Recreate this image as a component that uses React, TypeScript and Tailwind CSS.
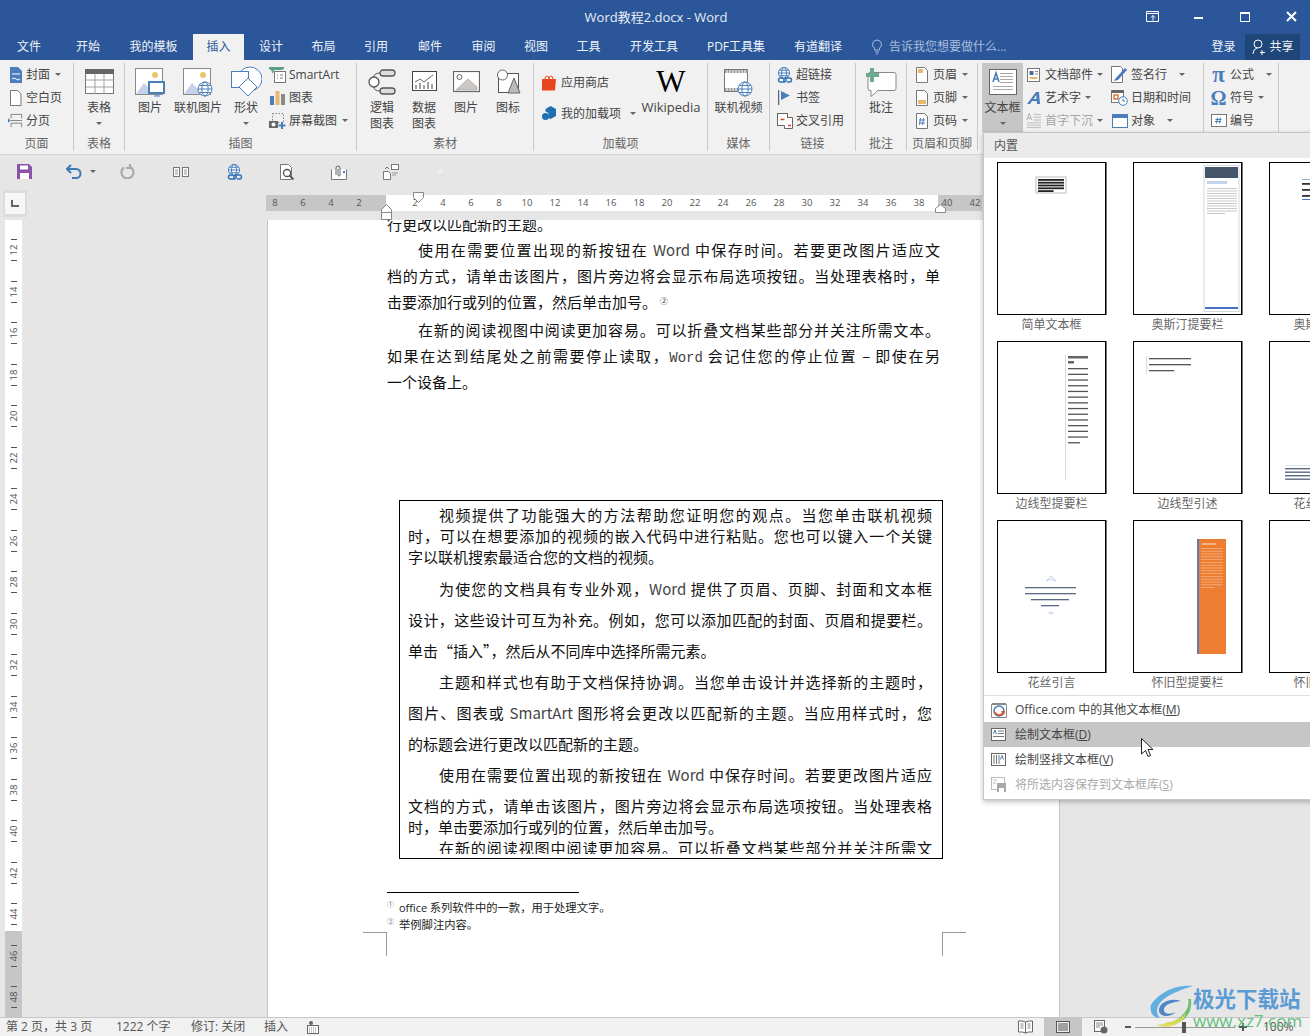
import type { ReactNode } from "react";
import clsx from "clsx";

const ICON = "#4a7ebb";

const tabs = [
  { label: "文件", w: "w-[58px]" },
  { label: "开始", w: "w-[60px]" },
  { label: "我的模板", w: "w-[75px] pr-[4px]" },
  { label: "插入", w: "w-[51px]", active: true },
  { label: "设计", w: "w-[54px]" },
  { label: "布局", w: "w-[51px]" },
  { label: "引用", w: "w-[54px]" },
  { label: "邮件", w: "w-[54px]" },
  { label: "审阅", w: "w-[53px]" },
  { label: "视图", w: "w-[52px]" },
  { label: "工具", w: "w-[53px]" },
  { label: "开发工具", w: "w-[78px]" },
  { label: "PDF工具集", w: "w-[86px]" },
  { label: "有道翻译", w: "w-[78px]" },
];

const rulerTop = ["8", "6", "4", "2", "", "2", "4", "6", "8", "10", "12", "14", "16", "18", "20", "22", "24", "26", "28", "30", "32", "34", "36", "38", "40", "42"];
const rulerSide = ["", "12", "14", "16", "18", "20", "22", "24", "26", "28", "30", "32", "34", "36", "38", "40", "42", "44", "46", "48"];

function Caret({ className }: { className?: string }) {
  return <span className={clsx("inline-block h-0 w-0 border-x-[3px] border-t-[3px] border-x-transparent border-t-[#666]", className)} />;
}

/* ---------- icons ---------- */
function Globe({ x, y, r }: { x: number; y: number; r: number }) {
  return (
    <g fill="#fff" stroke={ICON} strokeWidth="1">
      <circle cx={x} cy={y} r={r} />
      <ellipse cx={x} cy={y} rx={r * 0.45} ry={r} fill="none" />
      <path d={`M${x - r} ${y}H${x + r}M${x - r + 1} ${y - r / 2}H${x + r - 1}M${x - r + 1} ${y + r / 2}H${x + r - 1}`} fill="none" />
    </g>
  );
}

function Mountain({ online }: { online?: boolean }) {
  return (
    <svg width="32" height="32" viewBox="0 0 32 32">
      <rect x="1.5" y="2.5" width="27" height="26" fill="#fff" stroke="#8a8a8a" />
      <circle cx="21" cy="9" r="3" fill="#f0c36d" />
      <path d="M2 28L10 17l6 6 3 5z" fill="#c3d4e8" />
      {online ? (
        <Globe x={23} y={23} r={7} />
      ) : (
        <g>
          <rect x="15" y="16" width="15" height="11" fill="#fff" stroke={ICON} strokeWidth="2" />
          <path d="M20 30h6M23 27v3" stroke={ICON} />
        </g>
      )}
    </svg>
  );
}

const linkArt = (
  <>
    <Globe x={7} y={6} r={5.5} />
    <path d="M6 11H3.500a2 2 0 0 0 0 4h4a2 2 0 0 0 1-3.500M10 15h2.500a2 2 0 0 0 0-4h-4a2 2 0 0 0-1 3.500" fill="none" stroke="#2e74b5" strokeWidth="1.500" />
  </>
);

const ic = {
  cover: (
    <svg width="14" height="16" viewBox="0 0 14 16">
      <path d="M1 0h8l4 4v12H1z" fill={ICON} />
      <path d="M3 7h8M3 12q2-2 4 0t4 0" stroke="#fff" fill="none" />
    </svg>
  ),
  blank: (
    <svg width="13" height="16" viewBox="0 0 13 16">
      <path d="M1.5.5h7l3.500 3.500v11.500h-10.500z" fill="#fff" stroke="#777" />
    </svg>
  ),
  pageBreak: (
    <svg width="17" height="16" viewBox="0 0 17 16">
      <path d="M3.500 5V.5h12V5M3.500 15v-4.500h12V15" fill="none" stroke="#777" />
      <path d="M0 5l3 2.500L0 10z" fill={ICON} />
      <path d="M3 7.500h13" stroke="#777" />
    </svg>
  ),
  table: (
    <svg width="29" height="26" viewBox="0 0 29 26">
      <rect x=".5" y=".5" width="28" height="24" fill="#fff" stroke="#777" />
      <rect x="0" y="0" width="29" height="5" fill="#666" />
      <path d="M10 5v20M19 5v20M1 11h27M1 18h27" stroke="#a3a3a3" />
    </svg>
  ),
  shapes: (
    <svg width="32" height="32" viewBox="0 0 32 32">
      <circle cx="20" cy="13" r="12" fill="#fff" stroke={ICON} />
      <rect x="1.500" y="5.500" width="17" height="16" fill="#fff" stroke={ICON} />
      <path d="M18 12l9 9-9 9-9-9z" fill="#fff" stroke={ICON} />
    </svg>
  ),
  smartart: (
    <svg width="17" height="16" viewBox="0 0 17 16">
      <path d="M0 0h15v2l-3 1H5l-1 4-2-4-2-1z" fill="#5d9e8b" />
      <rect x="5.500" y="4.500" width="11" height="11" fill="#fff" stroke="#777" />
      <path d="M8 8h1M11 8h3M8 11h1M11 11h3" stroke="#777" />
    </svg>
  ),
  chart: (
    <svg width="15" height="15" viewBox="0 0 15 15">
      <rect x="0" y="6" width="4" height="9" fill={ICON} />
      <rect x="5.500" y="1" width="4" height="14" fill="#e8b96a" />
      <rect x="11" y="4" width="4" height="11" fill="#8a8a8a" />
    </svg>
  ),
  screenshot: (
    <svg width="17" height="16" viewBox="0 0 17 16">
      <rect x="3.500" y=".5" width="11" height="9" fill="none" stroke="#888" strokeDasharray="1.500 1.500" />
      <rect x="0" y="8" width="9" height="7" fill="#666" />
      <circle cx="4.500" cy="11.500" r="2" fill="#fff" />
      <path d="M13 9v7M9.500 12.500h7" stroke={ICON} strokeWidth="2" />
    </svg>
  ),
  logic: (
    <svg width="28" height="26" viewBox="0 0 28 26">
      <circle cx="6" cy="13" r="5" fill="#fff" stroke="#555" strokeWidth="1.300" />
      <rect x="12" y="1" width="15" height="6" rx="3" fill="#ddd" stroke="#555" strokeWidth="1.300" />
      <rect x="12" y="19" width="15" height="6" rx="3" fill="#ddd" stroke="#555" strokeWidth="1.300" />
      <path d="M12 4Q6 4 6 8M12 22Q6 22 6 18" fill="none" stroke="#555" />
    </svg>
  ),
  data: (
    <svg width="25" height="22" viewBox="0 0 25 22">
      <rect x=".5" y=".5" width="24" height="19" fill="#fff" stroke="#444" />
      <path d="M3 11l5-3 4 3 5-4 4-3" fill="none" stroke="#666" />
      <path d="M4 18v-4M8 18v-6M12 18v-4M16 18v-7M20 18v-5" stroke="#444" />
    </svg>
  ),
  picture: (
    <svg width="27" height="22" viewBox="0 0 27 22">
      <rect x=".5" y=".5" width="26" height="20" fill="#fff" stroke="#666" strokeWidth="1.200" />
      <circle cx="6.500" cy="6" r="2.500" fill="none" stroke="#666" />
      <path d="M3 19l12-11 9 8v3z" fill="#cbc7c4" stroke="#888" strokeWidth=".5" />
    </svg>
  ),
  icons: (
    <svg width="25" height="26" viewBox="0 0 25 26">
      <rect x="2.500" y="4.500" width="20" height="19" fill="#fff" stroke="#555" />
      <circle cx="6.500" cy="6" r="5" fill="#fff" stroke="#666" />
      <path d="M18 9l6 15H12z" fill="#bbb" stroke="#666" />
    </svg>
  ),
  store: (
    <svg width="15" height="16" viewBox="0 0 15 16">
      <path d="M0 4h14l-1 11.500H0z" fill="#e8471d" />
      <path d="M3 4q0-3 2-3t2 3q0-3 2-3t2 3" fill="none" stroke="#e8471d" />
    </svg>
  ),
  addin: (
    <svg width="15" height="15" viewBox="0 0 15 15">
      <path d="M8.500 0l5.500 3v7l-5.500 3-2-1V7L3.500 5.500V3z" fill="#1f6fb2" />
      <circle cx="3.500" cy="10.500" r="3.500" fill="#1f6fb2" />
    </svg>
  ),
  video: (
    <svg width="29" height="32" viewBox="0 0 29 32">
      <rect x=".5" y="3.500" width="23" height="22" fill="#fff" stroke="#777" />
      <path d="M1 4h23v3H1zM1 22h23v3H1z" fill="#999" />
      <path d="M3 4v3M6 4v3M9 4v3M12 4v3M15 4v3M18 4v3M21 4v3M3 22v3M6 22v3M9 22v3M12 22v3" stroke="#fff" />
      <Globe x={21} y={23} r={7} />
    </svg>
  ),
  link: (
    <svg width="16" height="16" viewBox="0 0 16 16">
      {linkArt}
    </svg>
  ),
  bookmark: (
    <svg width="13" height="15" viewBox="0 0 13 15">
      <path d="M.5 0v15" stroke="#666" strokeWidth="1.500" />
      <path d="M3 1l9 4.500L3 10z" fill={ICON} />
    </svg>
  ),
  crossref: (
    <svg width="16" height="16" viewBox="0 0 16 16">
      <rect x=".5" y=".5" width="10" height="12" fill="#fff" stroke="#666" />
      <path d="M10.500 4.500h5v11h-8v-3" fill="#fff" stroke="#666" />
      <path d="M3.500 6.500h4M11 12.500h3" stroke="#d2462a" strokeWidth="1.500" />
    </svg>
  ),
  comment: (
    <svg width="31" height="30" viewBox="0 0 31 30">
      <path d="M4 5.500h24a2 2 0 0 1 2 2v14a2 2 0 0 1-2 2H12l-7 6v-6H4a2 2 0 0 1-2-2v-14a2 2 0 0 1 2-2z" fill="#fff" stroke="#888" />
      <path d="M7 0v14M0 7h14" stroke="#6fa98f" strokeWidth="4" transform="translate(-1 1)" />
    </svg>
  ),
  header: (
    <svg width="12" height="16" viewBox="0 0 12 16">
      <path d="M.5.5h8l3 3v12H.5z" fill="#fff" stroke="#777" />
      <rect x="2" y="2" width="5" height="4" fill="#e8b96a" />
    </svg>
  ),
  footer: (
    <svg width="12" height="16" viewBox="0 0 12 16">
      <path d="M.5.5h8l3 3v12H.5z" fill="#fff" stroke="#777" />
      <rect x="2" y="10" width="8" height="4" fill="#e8b96a" />
    </svg>
  ),
  pageNo: (
    <svg width="12" height="16" viewBox="0 0 12 16">
      <path d="M.5.5h8l3 3v12H.5z" fill="#fff" stroke="#777" />
      <path d="M4.500 5l-1 7M7.500 5l-1 7M3 7h6M3 10h6" stroke={ICON} />
    </svg>
  ),
  textbox: (
    <svg width="28" height="26" viewBox="0 0 28 26">
      <rect x=".5" y=".5" width="27" height="25" fill="#fff" stroke="#666" />
      <path d="M11 4.500h13M11 7.500h13M11 10.500h13M11 13.500h13M4 17.500h20M4 20.500h20" stroke="#aaa" />
      <path d="M4 13l3-9 3 9M5 10h4" fill="none" stroke={ICON} strokeWidth="1.600" />
    </svg>
  ),
  parts: (
    <svg width="14" height="14" viewBox="0 0 14 14">
      <rect x=".5" y=".5" width="12" height="13" fill="#fff" stroke="#777" />
      <rect x="2.500" y="3" width="4" height="4" fill="#4a6f9f" />
      <path d="M8 3.500h3M8 6h3" stroke="#888" />
      <rect x="2.500" y="9" width="8" height="2" fill="#e8b96a" />
    </svg>
  ),
  wordart: (
    <svg width="14" height="14" viewBox="0 0 14 14">
      <path d="M0 13L9 1h3l1 12h-3l-.3-3H5l-2 3zM6.500 8h3L9.200 4z" fill={ICON} />
    </svg>
  ),
  dropcap: (
    <svg width="17" height="17" viewBox="0 0 17 17">
      <path d="M1 8l2.500-7L6 8M2 6h3" fill="none" stroke="#aaa" />
      <path d="M8 2h8M8 5h8M8 8h8M1 11h15M1 13.500h15M1 16h15" stroke="#bbb" />
    </svg>
  ),
  sign: (
    <svg width="17" height="17" viewBox="0 0 17 17">
      <path d="M.5.5h9l2 2v14H.5z" fill="#fff" stroke="#777" />
      <path d="M4 13L14 2l2 2L7 14l-4 1z" fill={ICON} />
    </svg>
  ),
  date: (
    <svg width="17" height="17" viewBox="0 0 17 17">
      <rect x=".5" y="1.500" width="12" height="12" fill="#fff" stroke="#777" />
      <rect x="1" y="1" width="12" height="3" fill="#666" />
      <rect x="3" y="6" width="4" height="4" fill="none" stroke="#d2691e" strokeWidth="1.300" />
      <circle cx="12" cy="12" r="4.300" fill="#fff" stroke={ICON} />
      <path d="M12 9.500V12h2" fill="none" stroke={ICON} />
    </svg>
  ),
  object: (
    <svg width="16" height="14" viewBox="0 0 16 14">
      <rect x=".5" y=".5" width="15" height="13" fill="#fff" stroke={ICON} />
      <rect x="0" y="0" width="16" height="4" fill={ICON} />
    </svg>
  ),
  numbering: (
    <svg width="16" height="13" viewBox="0 0 16 13">
      <rect x=".5" y=".5" width="15" height="12" fill="#fff" stroke="#777" />
      <path d="M6.500 3.500l-1 6M9.500 3.500l-1 6M4.500 5.500h6M4 7.500h6" stroke={ICON} />
    </svg>
  ),
};

/* ---------- ribbon parts ---------- */
function Group({ label, className, children }: { label?: string; className: string; children: ReactNode }) {
  return (
    <div className={clsx("flex h-[88px] shrink-0 flex-col border-r border-[#c9c9c9]", className)}>
      <div className="flex h-[73px]">{children}</div>
      <div className="h-[15px] text-center leading-[16px] text-[#666]">{label}</div>
    </div>
  );
}

function Big({ icon, lines, caret, className }: { icon: ReactNode; lines: string[]; caret?: boolean; className: string }) {
  return (
    <div className={clsx("flex shrink-0 flex-col items-center", className)}>
      <div className="flex h-[37px] items-center justify-center">{icon}</div>
      {lines.map((l) => (
        <div key={l} className="h-[15.500px] whitespace-nowrap leading-[16px]">
          {l}
        </div>
      ))}
      {caret && <Caret className="mt-[6px]" />}
    </div>
  );
}

function Row({ icon, text, caret, gray, box, caretClass }: { icon: ReactNode; text: string; caret?: boolean; gray?: boolean; box?: string; caretClass?: string }) {
  return (
    <div className={clsx("flex h-[23px] items-center whitespace-nowrap", gray && "text-[#a6a6a6]")}>
      <span className={clsx("mr-[3px] flex shrink-0 items-center justify-center", box ?? "w-[17px]")}>{icon}</span>
      {text}
      {caret && <Caret className={caretClass ?? "ml-[5px]"} />}
    </div>
  );
}

function Ribbon() {
  return (
    <div className="flex h-[95px] border-b border-[#d2d2d2] bg-[#f1f1f1] pt-[3px] text-[12px] text-[#444]">
      <Group label="页面" className="w-[74px]">
        <div className="pl-[8px]">
          <Row icon={ic.cover} text="封面" caret box="w-[15px]" />
          <Row icon={ic.blank} text="空白页" box="w-[15px]" />
          <Row icon={ic.pageBreak} text="分页" box="w-[15px]" />
        </div>
      </Group>
      <Group label="表格" className="w-[51px]">
        <Big className="w-[50px]" icon={ic.table} lines={["表格"]} caret />
      </Group>
      <Group label="插图" className="w-[232px]">
        <div className="flex pl-[2px]">
          <Big className="w-[46px]" icon={<Mountain />} lines={["图片"]} />
          <Big className="w-[50px]" icon={<Mountain online />} lines={["联机图片"]} />
          <Big className="w-[46px]" icon={ic.shapes} lines={["形状"]} caret />
          <div>
            <Row icon={ic.smartart} text="SmartArt" />
            <Row icon={ic.chart} text="图表" />
            <Row icon={ic.screenshot} text="屏幕截图" caret />
          </div>
        </div>
      </Group>
      <Group label="素材" className="w-[177px]">
        <div className="flex pl-[4px]">
          <Big className="w-[42px]" icon={ic.logic} lines={["逻辑", "图表"]} />
          <Big className="w-[42px]" icon={ic.data} lines={["数据", "图表"]} />
          <Big className="w-[42px]" icon={ic.picture} lines={["图片"]} />
          <Big className="w-[42px]" icon={ic.icons} lines={["图标"]} />
        </div>
      </Group>
      <Group label="加载项" className="w-[174px]">
        <div className="flex pl-[8px]">
          <div className="w-[98px] pt-[4px]">
            <div className="flex h-[31px] items-center">
              <span className="mr-[4px]">{ic.store}</span>应用商店
            </div>
            <div className="flex h-[31px] items-center">
              <span className="mr-[4px]">{ic.addin}</span>我的加载项
              <Caret className="ml-[9px]" />
            </div>
          </div>
          <div className="flex w-[62px] flex-col items-center">
            <div className="flex h-[36px] items-center font-['Liberation_Serif',serif] text-[31px] leading-none text-black">W</div>
            <div className="text-[13px] leading-[16px]">Wikipedia</div>
          </div>
        </div>
      </Group>
      <Group label="媒体" className="w-[62px]">
        <Big className="w-[61px]" icon={ic.video} lines={["联机视频"]} />
      </Group>
      <Group label="链接" className="w-[86px]">
        <div className="pl-[6px]">
          <Row icon={ic.link} text="超链接" />
          <Row icon={ic.bookmark} text="书签" />
          <Row icon={ic.crossref} text="交叉引用" />
        </div>
      </Group>
      <Group label="批注" className="w-[51px]">
        <Big className="w-[50px]" icon={ic.comment} lines={["批注"]} />
      </Group>
      <Group label="页眉和页脚" className="w-[71px]">
        <div className="pl-[6px]">
          <Row icon={ic.header} text="页眉" caret />
          <Row icon={ic.footer} text="页脚" caret />
          <Row icon={ic.pageNo} text="页码" caret />
        </div>
      </Group>
      <Group className="w-[226px]">
        <div className="flex pl-[4px]">
          <div className="h-[69px] w-[41px] bg-[#c6c6c6]">
            <Big className="w-[41px]" icon={ic.textbox} lines={["文本框"]} caret />
          </div>
          <div className="ml-[3px] w-[85px]">
            <Row icon={ic.parts} text="文档部件" caret box="w-[16px]" caretClass="ml-[4px]" />
            <Row icon={ic.wordart} text="艺术字" caret box="w-[16px]" caretClass="ml-[4px]" />
            <Row icon={ic.dropcap} text="首字下沉" caret gray box="w-[16px]" caretClass="ml-[4px]" />
          </div>
          <div>
            <Row icon={ic.sign} text="签名行" caret caretClass="ml-[12px]" />
            <Row icon={ic.date} text="日期和时间" />
            <Row icon={ic.object} text="对象" caret caretClass="ml-[12px]" />
          </div>
        </div>
      </Group>
      <Group className="w-[75px]">
        <div className="pl-[6px]">
          <Row icon={<span className="font-['Liberation_Serif',serif] text-[23px] font-bold leading-none text-[#4a7ebb]">π</span>} text="公式" caret caretClass="ml-[12px]" box="w-[17px]" />
          <Row icon={<span className="font-['Liberation_Serif',serif] text-[20px] font-bold leading-none text-[#4a7ebb]">Ω</span>} text="符号" caret caretClass="ml-[4px]" box="w-[17px]" />
          <Row icon={ic.numbering} text="编号" box="w-[17px]" />
        </div>
      </Group>
    </div>
  );
}

/* ---------- quick access ---------- */
function Toolbar() {
  return (
    <div className="flex h-[35px] items-center bg-[#e6e6e6] pb-[2px]">
      <svg className="ml-[17px]" width="15" height="15" viewBox="0 0 15 15">
        <path d="M0 0h12l3 3v12H0z" fill="#8c52a8" />
        <rect x="3" y="1.500" width="8" height="4" fill="#fff" />
        <rect x="3" y="9" width="9" height="6" fill="#fff" />
      </svg>
      <svg className="ml-[34px]" width="16" height="15" viewBox="0 0 16 15">
        <path d="M5 1L1 5l4 4M1 5h9a4.500 4.500 0 0 1 0 9H6" fill="none" stroke="#3b79b5" strokeWidth="2" />
      </svg>
      <Caret className="ml-[8px]" />
      <svg className="ml-[24px]" width="15" height="15" viewBox="0 0 15 15">
        <path d="M10 3a6 6 0 1 1-6 .5M10 0v4H6" fill="none" stroke="#aaa" strokeWidth="2.200" />
      </svg>
      <svg className="ml-[38px]" width="16" height="14" viewBox="0 0 16 14">
        <rect x=".5" y="2.500" width="6" height="9" fill="#fff" stroke="#777" />
        <rect x="9.500" y="2.500" width="6" height="9" fill="#fff" stroke="#777" />
        <path d="M2 5h3M2 7h3M2 9h3M11 5h3M11 7h3M11 9h3" stroke="#999" />
      </svg>
      <svg className="ml-[38px]" width="16" height="16" viewBox="0 0 16 16">
        {linkArt}
      </svg>
      <svg className="ml-[37px]" width="15" height="16" viewBox="0 0 15 16">
        <path d="M.5.5h8l3 3v12H.5z" fill="#fff" stroke="#777" />
        <circle cx="7" cy="9" r="3.500" fill="#fff" stroke="#555" strokeWidth="1.300" />
        <path d="M9.500 11.500l4 4" stroke="#555" strokeWidth="1.800" />
      </svg>
      <svg className="ml-[36px]" width="16" height="16" viewBox="0 0 16 16">
        <path d="M.5 5.500v10h15v-10" fill="#fff" stroke="#777" />
        <path d="M5 11V4a2 2 0 0 1 4 0v7a1 1 0 0 1-2 0V5" fill="none" stroke="#666" />
        <rect x="12" y="7" width="2" height="2" fill={ICON} />
      </svg>
      <svg className="ml-[36px]" width="16" height="16" viewBox="0 0 16 16">
        <path d="M.5 7.500h5l2 2v6h-7z" fill="#fff" stroke="#777" />
        <rect x="8.500" y=".5" width="7" height="5" fill="#fff" stroke="#777" />
        <path d="M2 5l2-2 2 2" fill="none" stroke={ICON} />
        <path d="M9 9h6M9 11h4" stroke="#999" />
      </svg>
      <span className="ml-[38px] flex flex-col items-center gap-[1px]">
        <span className="h-px w-[5px] bg-[#f3f3f3]" />
        <Caret className="border-t-[#f3f3f3]" />
      </span>
    </div>
  );
}

function TopRuler() {
  return (
    <div className="relative mt-[5px] h-[16px] w-[716px] bg-[linear-gradient(90deg,#c6c6c6_120px,#fff_120px,#fff_672px,#c6c6c6_672px)]">
      <div className="flex h-full overflow-hidden">
        <div className="-ml-[5px] flex">
          {rulerTop.map((n, i) => (
            <span key={i} className="w-[28px] shrink-0 text-center text-[9.500px] leading-[16px] text-[#555]">
              {n}
            </span>
          ))}
        </div>
      </div>
      <svg className="absolute left-[146px] -top-[3px]" width="13" height="13" viewBox="0 0 13 13">
        <path d="M1.500.5h10v5l-5 5-5-5z" fill="#fff" stroke="#888" />
      </svg>
      <svg className="absolute left-[114px] top-[9px]" width="13" height="16" viewBox="0 0 13 16">
        <path d="M1.500 5.500l5-5 5 5v10h-10zM1.500 8.500h10" fill="#fff" stroke="#888" />
      </svg>
      <svg className="absolute left-[668px] top-[9px]" width="13" height="9" viewBox="0 0 13 9">
        <path d="M1.500 4.500l5-4 5 4v4h-10z" fill="#fff" stroke="#888" />
      </svg>
    </div>
  );
}

function SideRuler() {
  return (
    <div className="ml-[5px] h-[797px] w-[17px] overflow-hidden bg-[linear-gradient(#fff_711px,#c6c6c6_711px)]">
      <div className="-mt-[32.250px]">
        {rulerSide.map((n, i) => (
          <div key={i} className="flex h-[41.500px] flex-col items-center justify-center text-[9.500px] text-[#555]">
            <span className="h-px w-[6px] bg-[#555]" />
            <span className="flex h-[20px] w-full -rotate-90 items-center justify-center leading-none">{n}</span>
            <span className="h-px w-[6px] bg-[#555]" />
          </div>
        ))}
      </div>
    </div>
  );
}

/* ---------- document ---------- */
function Line({ children, j, i, className }: { children: ReactNode; j?: boolean; i?: boolean; className?: string }) {
  return (
    <div className={clsx("whitespace-nowrap", j && "[text-align-last:justify]", i && "pl-[31px]", className)}>
      {children}
    </div>
  );
}

const W = ({ children }: { children: ReactNode }) => <span className="text-[#444]">{children}</span>;

function Page() {
  const outer = "h-[26px] leading-[26px]";
  const tight = "h-[21px] leading-[21px]";
  const loose = "h-[31px] leading-[31px]";
  return (
    <div className="h-[797px] w-[793px] overflow-hidden border-x border-[#c6c6c6] bg-white font-['Noto_Sans_CJK_SC',sans-serif] text-[15px] text-[#111]">
      <div className="-mt-[9.500px] ml-[119px] w-[553px]">
        <Line className={outer}>行更改以匹配新的主题。</Line>
        <Line j i className={outer}>使用在需要位置出现的新按钮在 <W>Word</W> 中保存时间。若要更改图片适应文</Line>
        <Line j className={outer}>档的方式&#xFF0C;请单击该图片&#xFF0C;图片旁边将会显示布局选项按钮。当处理表格时&#xFF0C;单</Line>
        <Line className={outer}>击要添加行或列的位置&#xFF0C;然后单击加号。<sup className="ml-[3px] text-[8px] text-[#333]">②</sup></Line>
        <Line j i className={clsx(outer, "mt-[2px]")}>在新的阅读视图中阅读更加容易。可以折叠文档某些部分并关注所需文本。</Line>
        <Line j className={outer}>如果在达到结尾处之前需要停止读取&#xFF0C;<span className="font-['Liberation_Mono',monospace] text-[14px] text-[#444]">Word</span> 会记住您的停止位置 – 即使在另</Line>
        <Line className={outer}>一个设备上。</Line>
      </div>
      <div className="ml-[131px] mt-[105.500px] h-[359px] w-[544px] overflow-hidden border border-black px-[8px] pt-[3px]">
        <div className="w-[524px]">
          <Line j i className={tight}>视频提供了功能强大的方法帮助您证明您的观点。当您单击联机视频</Line>
          <Line j className={tight}>时&#xFF0C;可以在想要添加的视频的嵌入代码中进行粘贴。您也可以键入一个关键</Line>
          <Line className={tight}>字以联机搜索最适合您的文档的视频。</Line>
          <Line j i className={clsx(loose, "mt-[6px]")}>为使您的文档具有专业外观&#xFF0C;<W>Word</W> 提供了页眉、页脚、封面和文本框</Line>
          <Line j className={loose}>设计&#xFF0C;这些设计可互为补充。例如&#xFF0C;您可以添加匹配的封面、页眉和提要栏。</Line>
          <Line className={loose}>单击“插入”&#xFF0C;然后从不同库中选择所需元素。</Line>
          <Line j i className={loose}>主题和样式也有助于文档保持协调。当您单击设计并选择新的主题时&#xFF0C;</Line>
          <Line j className={loose}>图片、图表或 <W>SmartArt</W> 图形将会更改以匹配新的主题。当应用样式时&#xFF0C;您</Line>
          <Line className={loose}>的标题会进行更改以匹配新的主题。</Line>
          <Line j i className={loose}>使用在需要位置出现的新按钮在 <W>Word</W> 中保存时间。若要更改图片适应</Line>
          <Line j className={loose}>文档的方式&#xFF0C;请单击该图片&#xFF0C;图片旁边将会显示布局选项按钮。当处理表格</Line>
          <Line className={clsx(tight, "-mt-[5px]")}>时&#xFF0C;单击要添加行或列的位置&#xFF0C;然后单击加号。</Line>
          <Line j i className="h-[17px] overflow-hidden leading-[21px]">在新的阅读视图中阅读更加容易。可以折叠文档某些部分并关注所需文</Line>
        </div>
      </div>
      <div className="ml-[119px] mt-[33px] h-px w-[192px] bg-black" />
      <div className="ml-[119px] mt-[6px] text-[11.300px] leading-[17px] text-[#222]">
        <div className="flex h-[17px] items-center">
          <sup className="mr-[3px] w-[9px] text-[7px] text-[#666]">①</sup>
          <span className="font-['Open_Sans','Noto_Sans_CJK_SC',sans-serif] text-[11px]">office</span>&nbsp;系列软件中的一款&#xFF0C;用于处理文字。
        </div>
        <div className="flex h-[17px] items-center">
          <sup className="mr-[3px] w-[9px] text-[7px] text-[#666]">②</sup>举例脚注内容。
        </div>
      </div>
      <div className="ml-[95px] mt-[-1px] flex w-[603px] justify-between">
        <div className="h-[24px] w-[24px] border-r border-t border-[#999]" />
        <div className="h-[24px] w-[24px] border-l border-t border-[#999]" />
      </div>
    </div>
  );
}

/* ---------- gallery dropdown ---------- */
function Bars({ x, y, w, n, gap, h, fill }: { x: number; y: number; w: number; n: number; gap: number; h: number; fill: string }) {
  return (
    <>
      {Array.from({ length: n }, (_, i) => (
        <rect key={i} x={x} y={y + i * gap} width={i === n - 1 ? w * 0.6 : w} height={h} fill={fill} />
      ))}
    </>
  );
}

const thumbs: { label: string; art: ReactNode }[] = [
  {
    label: "简单文本框",
    art: (
      <>
        <rect x="39" y="15" width="30" height="16" fill="#fff" stroke="#bbb" />
        <Bars x={41} y={17} w={26} n={5} gap={2.8} h={1.8} fill="#222" />
      </>
    ),
  },
  {
    label: "奥斯汀提要栏",
    art: (
      <>
        <rect x="71" y="3.500" width="35" height="146" fill="#fff" stroke="#d4d8e0" />
        <rect x="72" y="5" width="33" height="11" fill="#44546a" />
        <rect x="74" y="19" width="20" height="3" fill="#c5d3ec" />
        <Bars x={74} y={26} w={30} n={11} gap={2.5} h={1} fill="#c9c9c9" />
        <rect x="72" y="145" width="33" height="2" fill="#4472c4" />
      </>
    ),
  },
  {
    label: "奥斯汀引言",
    art: (
      <>
        <rect x="33" y="17" width="40" height="1" fill="#8fb0e0" />
        <Bars x={33} y={21} w={40} n={3} gap={6} h={1.8} fill="#333" />
        <rect x="33" y="37" width="40" height="1" fill="#4472c4" />
      </>
    ),
  },
  {
    label: "边线型提要栏",
    art: (
      <>
        <rect x="68" y="14" width="1" height="125" fill="#cfdcf3" />
        <rect x="71" y="15" width="20" height="2.500" fill="#666" />
        <rect x="71" y="20" width="6" height="2.500" fill="#666" />
        <Bars x={71} y={27} w={20} n={14} gap={5.7} h={1.3} fill="#555" />
      </>
    ),
  },
  {
    label: "边线型引述",
    art: (
      <>
        <rect x="13" y="15" width="1" height="18" fill="#cfdcf3" />
        <Bars x={16} y={17} w={42} n={3} gap={6} h={1.3} fill="#555" />
      </>
    ),
  },
  {
    label: "花丝提要栏",
    art: (
      <>
        <rect x="16" y="124" width="92" height="1" fill="#dfe6f2" />
        <Bars x={16} y={127} w={92} n={4} gap={3.5} h={1.4} fill="#5a6a85" />
      </>
    ),
  },
  {
    label: "花丝引言",
    art: (
      <>
        <path d="M49 61l5-5 5 5-5-2zM51 93h6M54 91v4" fill="none" stroke="#c5d3ec" />
        <rect x="28" y="67" width="51" height="1.300" fill="#5a6a85" />
        <rect x="28" y="73" width="51" height="1.300" fill="#5a6a85" />
        <rect x="34" y="79" width="38" height="1.300" fill="#5a6a85" />
        <rect x="44" y="85" width="18" height="1.300" fill="#5a6a85" />
      </>
    ),
  },
  {
    label: "怀旧型提要栏",
    art: (
      <>
        <rect x="64" y="19" width="29" height="115" fill="#ed7d31" />
        <rect x="64" y="19" width="2" height="115" fill="#5b7cb5" />
        <rect x="69" y="23" width="14" height="2" fill="#f4b183" />
        <Bars x={68} y={28} w={22} n={15} gap={2.8} h={0.8} fill="#f4b183" />
      </>
    ),
  },
  { label: "怀旧型引言", art: null },
];

function Dropdown() {
  return (
    <div className="absolute left-[983px] top-[132px] z-20 w-[340px] border border-[#c6c6c6] bg-white pb-[2px] text-[12px] text-[#444] shadow-[0_2px_5px_rgba(0,0,0,0.25)]">
      <div className="flex h-[25px] items-center bg-[#ebebeb] pl-[10px] text-[#555]">内置</div>
      <div className="grid w-[422px] grid-cols-[109px_109px_109px] gap-x-[27px] pl-[13px] pt-[4px]">
        {thumbs.map((t) => (
          <div key={t.label} className="w-[109px]">
            <svg className="block border border-black bg-white shadow-[1px_0_0_#777]" width="109" height="153" viewBox="0 0 107 151">
              <g transform="translate(-1 -1)">{t.art}</g>
            </svg>
            <div className="flex h-[26px] justify-center whitespace-nowrap pb-[6px] leading-[20px] text-[#666]">{t.label}</div>
          </div>
        ))}
      </div>
      <div className="-mt-[4px] h-px bg-[#dedede]" />
      <div className="mt-[1px]">
        <MenuItem
          label="Office.com 中的其他文本框"
          k="M"
          icon={
            <svg width="16" height="16" viewBox="0 0 16 16">
              <path d="M.5 2.500h15v13h-15z" fill="#fff" stroke="#888" />
              <path d="M1 1h14v2H1z" fill="#888" />
              <circle cx="8" cy="9" r="5" fill="none" stroke="#4a7ebb" strokeWidth="1.500" />
              <path d="M3 9a5 5 0 0 0 9 3l1 1 1-4-4 0 1 1.500a3.500 3.500 0 0 1-6 0z" fill="#e0532a" />
            </svg>
          }
        />
        <MenuItem
          label="绘制文本框"
          k="D"
          active
          icon={
            <svg width="15" height="13" viewBox="0 0 15 13">
              <rect x=".5" y=".5" width="14" height="12" fill="#fff" stroke="#666" />
              <path d="M2.500 6l1.500-4 1.500 4" fill="none" stroke={ICON} />
              <path d="M7 3h6M7 5.500h6M2 8.500h11" stroke="#777" />
            </svg>
          }
        />
        <MenuItem
          label="绘制竖排文本框"
          k="V"
          icon={
            <svg width="15" height="13" viewBox="0 0 15 13">
              <rect x=".5" y=".5" width="14" height="12" fill="#fff" stroke="#666" />
              <path d="M3 2v9M5.500 2v9M8 2v9" stroke="#777" />
              <path d="M9.500 6.500l1.500-4 1.500 4" fill="none" stroke={ICON} />
            </svg>
          }
        />
        <MenuItem
          label="将所选内容保存到文本框库"
          k="S"
          disabled
          icon={
            <svg width="15" height="15" viewBox="0 0 15 15">
              <rect x=".5" y=".5" width="13" height="12" fill="#fff" stroke="#bbb" />
              <path d="M2 3h4M2 6h3" stroke="#bbb" />
              <rect x="6" y="6" width="9" height="9" fill="#a8a8a8" />
              <rect x="8" y="11" width="5" height="4" fill="#fff" />
            </svg>
          }
        />
      </div>
      <svg className="absolute left-[157px] top-[605px]" width="14" height="20" viewBox="0 0 14 20">
        <path d="M.5.500v15.500l4-3.500 2.500 6 2.500-1-2.500-6h5z" fill="#fff" stroke="#222" />
      </svg>
    </div>
  );
}

function MenuItem({ label, k, icon, active, disabled }: { label: string; k: string; icon: ReactNode; active?: boolean; disabled?: boolean }) {
  return (
    <div className={clsx("flex h-[25px] items-center", active && "bg-[#c6c6c6]", disabled && "text-[#aaa]")}>
      <span className="flex w-[31px] justify-center pr-[2px]">{icon}</span>
      {label}(<span className="underline">{k}</span>)
    </div>
  );
}

/* ---------- status bar ---------- */
function StatusBar() {
  return (
    <div className="flex h-[19px] items-center border-t border-[#c6c6c6] bg-[#f1f1f1] text-[12px] text-[#555]">
      <span className="ml-[6px] w-[110px]">第 2 页&#xFF0C;共 3 页</span>
      <span className="w-[75px]">1222 个字</span>
      <span className="w-[73px]">修订: 关闭</span>
      <span className="w-[43px]">插入</span>
      <svg width="12" height="13" viewBox="0 0 12 13">
        <circle cx="4" cy="2" r="2" fill="#666" />
        <rect x=".5" y="4.500" width="11" height="8" fill="#fff" stroke="#666" />
        <path d="M2 7h8M2 9h8M2 11h8" stroke="#888" strokeDasharray="1 1" />
      </svg>
      <svg className="ml-[699px]" width="15" height="14" viewBox="0 0 15 14">
        <path d="M7.500 2Q4 .5.500 1v11q4-.5 7 1 3-1.500 7-1V1q-3.500-.5-7 1zM7.500 2v11" fill="#fff" stroke="#666" />
        <path d="M2.500 4h3M2.500 6h3M2.500 8h3M9.500 4h3M9.500 6h3M9.500 8h3" stroke="#888" />
      </svg>
      <span className="ml-[11px] flex h-full w-[38px] items-center justify-center bg-[#c6c6c6]">
        <svg width="14" height="12" viewBox="0 0 14 12">
          <rect x=".5" y=".5" width="13" height="11" fill="#eee" stroke="#555" />
          <path d="M2 3h10M2 5h10M2 7h10M2 9h10" stroke="#555" />
        </svg>
      </span>
      <svg className="ml-[12px]" width="14" height="14" viewBox="0 0 14 14">
        <rect x=".5" y=".5" width="10" height="11" fill="#fff" stroke="#666" />
        <path d="M2 3h7M2 5h7M2 7h4" stroke="#888" />
        <circle cx="10" cy="10" r="3.500" fill="#666" />
      </svg>
      <span className="ml-[17px] h-[2px] w-[6px] bg-[#555]" />
      <span className="relative ml-[4px] h-px w-[100px] bg-[#999]">
        <span className="absolute left-[47px] -top-[5px] h-[11px] w-[4px] bg-[#555]" />
      </span>
      <span className="relative ml-[4px] h-[2px] w-[8px] bg-[#555]">
        <span className="absolute left-[3px] -top-[3px] h-[8px] w-[2px] bg-[#555]" />
      </span>
      <span className="ml-[16px]">100%</span>
    </div>
  );
}

function Watermark() {
  return (
    <div className="absolute left-[1150px] top-[985px] flex">
      <svg width="45" height="42" viewBox="0 0 45 42">
        <path d="M43 1C26-1 8 8 1 20c-2 8 3 13 9 13-5-5-4-13 4-19C22 8 33 4 43 1z" fill="#63aee0" />
        <path d="M31 16C20 12 8 18 9 26c1 6 11 7 17 1-6 3-13 2-12-3 1-5 9-7 17-8z" fill="#4f86c6" />
        <path d="M38 14c3 10-8 22-22 25 13 1 27-6 25-25z" fill="#6cc070" />
        <path d="M18 37c8-1 14-4 18-9-1 7-8 12-18 14-4 0-9-1-12-2 4 0 8-1 12-3z" fill="#dcdc55" opacity=".9" />
      </svg>
      <div className="-ml-[2px] flex flex-col">
        <span className="font-['Noto_Sans_CJK_SC',sans-serif] text-[21.500px] font-bold leading-[26px] text-[#5b9bd5]">极光下载站</span>
        <span className="mt-[1px] font-['Open_Sans',sans-serif] text-[17px] leading-[18px] text-[#63c07c]">www.xz7.com</span>
      </div>
    </div>
  );
}

export default function App() {
  return (
    <div className="relative h-[1036px] w-[1310px] overflow-hidden bg-[#e6e6e6] font-['Open_Sans','Noto_Sans_CJK_SC',sans-serif] text-[12px]">
      {/* title bar */}
      <div className="relative flex h-[34px] items-center justify-center bg-[#2b579a] pl-[2px] pt-[1px] text-[13px] text-[#e8edf5]">
        Word教程2.docx - Word
        <svg className="absolute left-[1146px] top-[11px]" width="14" height="12" viewBox="0 0 14 12">
          <path d="M.5.5h12v10H.5zM1 2.500h12M7 9.500V4.500M5 6.500l2-2 2 2" fill="none" stroke="#fff" />
        </svg>
        <span className="absolute left-[1194px] top-[17px] h-[2px] w-[9px] bg-white" />
        <span className="absolute left-[1240px] top-[12px] h-[10px] w-[10px] border border-t-2 border-white" />
        <svg className="absolute left-[1286px] top-[11px]" width="11" height="11" viewBox="0 0 11 11">
          <path d="M1 1l9 9M10 1l-9 9" stroke="#fff" strokeWidth="2" />
        </svg>
      </div>

      {/* tabs */}
      <div className="flex h-[26px] items-center bg-[#2b579a] text-[#f0f3f8]">
        {tabs.map((t) => (
          <div
            key={t.label}
            className={clsx("flex h-full shrink-0 items-center justify-center whitespace-nowrap", t.w, t.active && "bg-[#f1f1f1] text-[#2b579a]")}
          >
            {t.label}
          </div>
        ))}
        <svg className="ml-[14px]" width="12" height="16" viewBox="0 0 12 16">
          <path d="M6 1a4.500 4.500 0 0 0-2.500 8.200V11h5V9.200A4.500 4.500 0 0 0 6 1zM4 13h4M5 15h2" fill="none" stroke="#a9bcd9" />
        </svg>
        <span className="ml-[6px] text-[#a9bcd9]">告诉我您想要做什么...</span>
        <span className="ml-[205px] text-[#f0f3f8]">登录</span>
        <div className="ml-[10px] flex h-full w-[55px] items-center justify-center gap-[3px] bg-[#1f4678]">
          <svg width="14" height="16" viewBox="0 0 14 16">
            <circle cx="6" cy="5" r="4" fill="none" stroke="#fff" />
            <path d="M1 15q0-5 4-6M10 11v5M8 13.500h5" fill="none" stroke="#fff" />
          </svg>
          共享
        </div>
      </div>

      <Ribbon />
      <Toolbar />

      {/* ruler row */}
      <div className="flex h-[30px]">
        <div className="ml-[3px] flex h-[27px] w-[24px] items-center justify-center bg-[#dcdcdc]">
          <span className="flex h-[21px] w-[20px] items-center justify-center bg-[#f7f7f7]">
            <span className="h-[7px] w-[8px] border-b-2 border-l-2 border-[#666]" />
          </span>
        </div>
        <div className="ml-[239px]">
          <TopRuler />
        </div>
      </div>

      {/* document area */}
      <div className="flex">
        <div className="w-[267px] shrink-0">
          <SideRuler />
        </div>
        <Page />
      </div>

      <StatusBar />
      <Dropdown />
      <Watermark />
    </div>
  );
}
